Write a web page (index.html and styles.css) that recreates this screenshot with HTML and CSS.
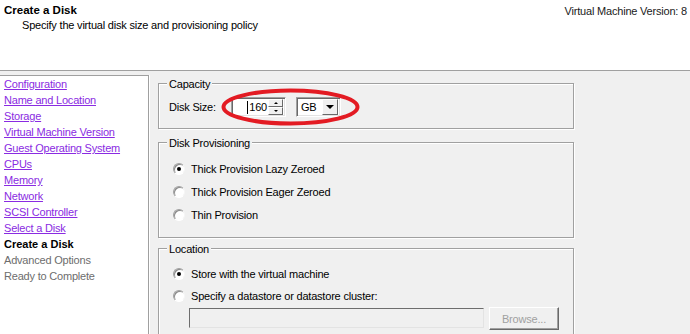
FILE: index.html
```html
<!DOCTYPE html>
<html>
<head>
<meta charset="utf-8">
<link rel="stylesheet" href="styles.css">
</head>
<body>
<div class="page">
  <header class="header">
    <div class="titles">
      <div class="title">Create a Disk</div>
      <div class="subtitle">Specify the virtual disk size and provisioning policy</div>
    </div>
    <div class="version">Virtual Machine Version: 8</div>
  </header>
  <div class="main">
    <nav class="nav">
      <a class="link" href="#">Configuration</a>
      <a class="link" href="#">Name and Location</a>
      <a class="link" href="#">Storage</a>
      <a class="link" href="#">Virtual Machine Version</a>
      <a class="link" href="#">Guest Operating System</a>
      <a class="link" href="#">CPUs</a>
      <a class="link" href="#">Memory</a>
      <a class="link" href="#">Network</a>
      <a class="link" href="#">SCSI Controller</a>
      <a class="link" href="#">Select a Disk</a>
      <span class="step current">Create a Disk</span>
      <span class="step pending">Advanced Options</span>
      <span class="step pending">Ready to Complete</span>
    </nav>
    <div class="content">
      <section class="group capacity">
        <div class="legend">Capacity</div>
        <div class="size-row">
          <span class="label">Disk Size:</span>
          <div class="spin">
            <span class="spin-val"><span class="caret"></span>160</span>
            <div class="spin-btns">
              <span class="sb"><span class="tri-up"></span></span>
              <span class="sb"><span class="tri-down"></span></span>
            </div>
          </div>
          <div class="combo">
            <span class="combo-val">GB</span>
            <span class="combo-btn"><span class="tri-combo"></span></span>
          </div>
        </div>
        <svg class="highlight" width="140" height="38" viewBox="0 0 140 38">
          <ellipse cx="69.5" cy="19" rx="67" ry="16.5" fill="none" stroke="#e31b23" stroke-width="4"/>
        </svg>
      </section>
      <section class="group provisioning">
        <div class="legend">Disk Provisioning</div>
        <div class="radio-row first"><span class="radio checked"></span><span>Thick Provision Lazy Zeroed</span></div>
        <div class="radio-row"><span class="radio"></span><span>Thick Provision Eager Zeroed</span></div>
        <div class="radio-row"><span class="radio"></span><span>Thin Provision</span></div>
      </section>
      <section class="group location">
        <div class="legend">Location</div>
        <div class="radio-row first"><span class="radio checked"></span><span>Store with the virtual machine</span></div>
        <div class="radio-row second"><span class="radio"></span><span>Specify a datastore or datastore cluster:</span></div>
        <div class="field-row">
          <div class="field"></div>
          <div class="button">Browse...</div>
        </div>
      </section>
    </div>
  </div>
</div>
</body>
</html>
```

FILE: styles.css
```css
html, body {
  margin: 0;
  padding: 0;
}

body {
  font-family: "Liberation Sans", Arial, sans-serif;
  font-size: 11px;
  letter-spacing: -0.2px;
  color: #000;
  background: #f0f0f0;
}

.page {
  width: 690px;
  height: 334px;
  overflow: hidden;
  display: flex;
  flex-direction: column;
  background: #f0f0f0;
}

.header {
  flex: none;
  height: 70px;
  background: #fff;
  border-bottom: 1px solid #a0a0a0;
  display: flex;
  justify-content: space-between;
}

.titles {
  padding: 3px 0 0 4px;
}

.title {
  font-weight: bold;
  font-size: 11.5px;
  line-height: 14px;
  letter-spacing: 0;
}

.subtitle {
  margin-top: 1px;
  padding-left: 18px;
  line-height: 14px;
}

.version {
  padding: 4px 3px 0 0;
  line-height: 14px;
  color: #1a1a1a;
}

.main {
  flex: 1;
  min-height: 0;
  display: flex;
}

.nav {
  flex: none;
  width: 149px;
  box-sizing: border-box;
  margin-top: 4px;
  padding-left: 4px;
  background: #fff;
  border-top: 1px solid #a0a0a0;
  border-right: 1px solid #a0a0a0;
  box-shadow: 1px 0 0 #fff;
  display: flex;
  flex-direction: column;
  align-items: flex-start;
}

.link,
.step {
  line-height: 16px;
  white-space: nowrap;
}

.link {
  color: #8a2be2;
  text-decoration: underline;
}

.current {
  font-weight: bold;
  letter-spacing: 0;
}

.pending {
  color: #6d6d6d;
}

.content {
  flex: 1;
  padding: 12px 0 0 9px;
}

.group {
  position: relative;
  width: 416px;
  box-sizing: border-box;
  border: 1px solid #a0a0a0;
  box-shadow: inset 1px 1px 0 #fff, 1px 1px 0 #fff;
  padding: 0 10px;
}

.legend {
  display: table;
  margin: -7px 0 0 -2px;
  padding: 0 2px;
  line-height: 14px;
  background: #f0f0f0;
}

.capacity {
  padding-bottom: 11px;
}

.size-row {
  margin-top: 6px;
  height: 20px;
  display: flex;
  align-items: center;
}

.label {
  width: 62px;
  flex: none;
}

.spin {
  width: 55px;
  height: 20px;
  box-sizing: border-box;
  border: 1px solid;
  border-color: #a0a0a0 #fff #fff #a0a0a0;
  box-shadow: inset 1px 1px 0 #696969, inset -1px -1px 0 #e3e3e3;
  background: #fff;
  display: flex;
  align-items: center;
  justify-content: flex-end;
  padding: 2px 2px 2px 0;
}

.spin-val {
  display: flex;
  align-items: center;
  padding-right: 1px;
  line-height: 14px;
}

.caret {
  width: 1px;
  height: 13px;
  background: #000;
  margin-right: 1px;
}

.spin-btns {
  width: 15px;
  height: 16px;
  display: flex;
  flex-direction: column;
}

.sb {
  flex: 1;
  box-sizing: border-box;
  background: #f0f0f0;
  border: 1px solid;
  border-color: #fff #696969 #696969 #fff;
  display: flex;
  align-items: center;
  justify-content: center;
}

.tri-up {
  width: 0;
  height: 0;
  border-left: 2px solid transparent;
  border-right: 2px solid transparent;
  border-bottom: 2px solid #000;
}

.tri-down {
  width: 0;
  height: 0;
  border-left: 2px solid transparent;
  border-right: 2px solid transparent;
  border-top: 2px solid #000;
}

.combo {
  margin-left: 10px;
  width: 45px;
  height: 20px;
  box-sizing: border-box;
  border: 1px solid;
  border-color: #a0a0a0 #fff #fff #a0a0a0;
  box-shadow: inset 1px 1px 0 #696969, inset -1px -1px 0 #e3e3e3;
  background: #fff;
  display: flex;
  align-items: center;
  justify-content: space-between;
  padding: 2px;
}

.combo-val {
  padding-left: 2px;
}

.combo-btn {
  width: 16px;
  height: 16px;
  box-sizing: border-box;
  background: #f0f0f0;
  border: 1px solid;
  border-color: #fff #696969 #696969 #fff;
  display: flex;
  align-items: center;
  justify-content: center;
}

.tri-combo {
  width: 0;
  height: 0;
  border-left: 4px solid transparent;
  border-right: 4px solid transparent;
  border-top: 4px solid #000;
}

.highlight {
  position: absolute;
  left: 62px;
  top: 4px;
}

.provisioning {
  margin-top: 13px;
  padding-bottom: 11px;
}

.provisioning .first {
  margin-top: 7px;
}

.radio-row {
  height: 23px;
  display: flex;
  align-items: center;
  padding-left: 4px;
}

.radio {
  flex: none;
  width: 12px;
  height: 12px;
  box-sizing: border-box;
  border-radius: 50%;
  border: 1px solid;
  border-color: #a0a0a0 #f6f6f6 #fff #a0a0a0;
  background: #fff;
  box-shadow: inset 1px 1px 0 #8a8a8a;
  margin-right: 6px;
  display: flex;
  align-items: center;
  justify-content: center;
}

.radio.checked::after {
  content: "";
  width: 4px;
  height: 4px;
  border-radius: 50%;
  background: #000;
}

.location {
  margin-top: 10px;
  padding-bottom: 10px;
}

.location .first {
  margin-top: 6px;
}

.location .second {
  height: 22px;
}

.field-row {
  display: flex;
  align-items: flex-start;
  padding-left: 20px;
}

.field {
  margin-top: 1px;
  width: 295px;
  height: 20px;
  box-sizing: border-box;
  border: 1px solid;
  border-color: #6d6d6d #e3e3e3 #e3e3e3 #6d6d6d;
  background: #f0f0f0;
}

.button {
  margin-left: 5px;
  width: 70px;
  height: 23px;
  box-sizing: border-box;
  border: 1px solid;
  border-color: #fff #696969 #696969 #fff;
  box-shadow: inset -1px -1px 0 #a0a0a0;
  color: #a0a0a0;
  display: flex;
  align-items: center;
  justify-content: center;
}
```
